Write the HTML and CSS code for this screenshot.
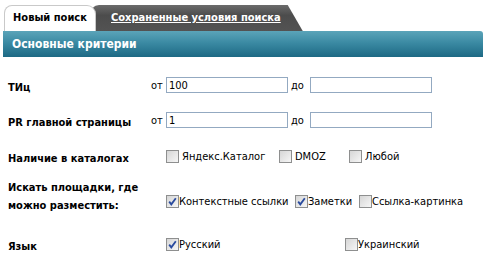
FILE: index.html
```html
<!DOCTYPE html>
<html lang="ru">
<head>
<meta charset="utf-8">
<link rel="stylesheet" href="styles.css">
</head>
<body>
<div class="tabs">
  <div class="tab tab-active">Новый поиск</div>
  <div class="tab tab-other"><a href="#">Сохраненные условия поиска</a></div>
</div>
<div class="bar">Основные критерии</div>
<div class="form">
  <div class="row r1">
    <div class="label">ТИц</div>
    <div class="ctrl">
      <span class="from">от</span><input class="txt" type="text" value="100"><span class="to">до</span><input class="txt" type="text" value="">
    </div>
  </div>
  <div class="row r2">
    <div class="label">PR главной страницы</div>
    <div class="ctrl">
      <span class="from">от</span><input class="txt" type="text" value="1"><span class="to">до</span><input class="txt" type="text" value="">
    </div>
  </div>
  <div class="row r3">
    <div class="label">Наличие в каталогах</div>
    <div class="ctrl checks">
      <label class="item w113"><span class="cb gap"></span>Яндекс.Каталог</label>
      <label class="item w70"><span class="cb gap"></span>DMOZ</label>
      <label class="item"><span class="cb gap"></span>Любой</label>
    </div>
  </div>
  <div class="row r4">
    <div class="label two">Искать площадки, где<br>можно разместить:</div>
    <div class="ctrl checks down">
      <label class="item w129"><span class="cb on"><svg viewBox="0 0 11 11"><path d="M2.2 5.6 L4.3 8.4 L8.8 2.2"/></svg></span>Контекстные ссылки</label>
      <label class="item w64"><span class="cb on"><svg viewBox="0 0 11 11"><path d="M2.2 5.6 L4.3 8.4 L8.8 2.2"/></svg></span>Заметки</label>
      <label class="item"><span class="cb"></span>Ссылка-картинка</label>
    </div>
  </div>
  <div class="row r5">
    <div class="label">Язык</div>
    <div class="ctrl checks">
      <label class="item w179"><span class="cb on"><svg viewBox="0 0 11 11"><path d="M2.2 5.6 L4.3 8.4 L8.8 2.2"/></svg></span>Русский</label>
      <label class="item"><span class="cb"></span>Украинский</label>
    </div>
  </div>
</div>
</body>
</html>
```
FILE: styles.css
```css
html, body {
  margin: 0;
  padding: 0;
  background: #fff;
  overflow: hidden;
}
body {
  font-family: "DejaVu Sans Condensed", "DejaVu Sans", sans-serif;
  font-stretch: condensed;
  font-size: 11px;
  color: #000;
}
.tabs {
  display: flex;
  padding: 5px 0 0 4px;
  height: 26px;
  box-sizing: content-box;
}
.tab {
  height: 26px;
  box-sizing: border-box;
  font-weight: bold;
  font-size: 11px;
  line-height: 24px;
}
.tab-active {
  position: relative;
  z-index: 1;
  width: 92px;
  background: #fff;
  border: 1px solid #c9c9c9;
  border-bottom: 0;
  border-radius: 8px 9px 0 0;
  text-align: center;
  color: #000;
}
.tab-other {
  margin-left: -6px;
  padding: 1px 22px 0 21px;
  background: linear-gradient(#6b6b6b, #4c4c4c 40%, #535353);
  border-radius: 9px 0 0 0;
  clip-path: polygon(0 0, calc(100% - 15px) 0, 100% 100%, 0 100%);
}
.tab-other a {
  color: #fff;
  text-decoration: underline;
}
.bar {
  margin: 0 2px 0 3px;
  height: 26px;
  padding-left: 9px;
  background: linear-gradient(#5ba4b9, #3b8aa3 45%, #1d6984);
  border-radius: 0 3px 0 0;
  color: #fff;
  font-weight: bold;
  font-size: 12px;
  line-height: 26px;
}
.form {
  padding: 10px 0 0 8px;
}
.row {
  display: flex;
  align-items: center;
}
.r1 { height: 36px; }
.r2 { height: 34px; }
.r3 { height: 38px; }
.r4 { height: 52px; }
.r5 { height: 34px; }
.label {
  width: 143px;
  flex: none;
  font-weight: bold;
  padding-top: 5px;
}
.label.two {
  padding-top: 0;
  padding-bottom: 8px;
  line-height: 18px;
}
.ctrl {
  display: flex;
  align-items: center;
}
.from {
  width: 15px;
}
.to {
  width: 22px;
  box-sizing: border-box;
  padding-left: 3px;
}
.txt {
  width: 122px;
  height: 16px;
  box-sizing: border-box;
  margin: 0;
  padding: 0 2px;
  border: 1px solid #93a9c1;
  font-family: inherit;
  font-size: 11px;
  color: #000;
  outline: none;
}
.checks {
  padding-left: 15px;
}
.checks.down {
  padding-top: 0;
}
.item {
  display: flex;
  align-items: center;
  white-space: nowrap;
}
.w113 { width: 113px; }
.w70 { width: 70px; }
.w129 { width: 129px; }
.w64 { width: 64px; }
.w179 { width: 179px; }
.cb {
  display: block;
  flex: none;
  width: 13px;
  height: 13px;
  box-sizing: border-box;
  border: 1px solid #8e8f8f;
  background: linear-gradient(135deg, #d6d6d6, #f6f6f6);
}
.cb.gap {
  margin-right: 3px;
}
.cb svg {
  display: block;
  width: 11px;
  height: 11px;
}
.cb svg path {
  fill: none;
  stroke: #2a4b9e;
  stroke-width: 1.8;
}
```
